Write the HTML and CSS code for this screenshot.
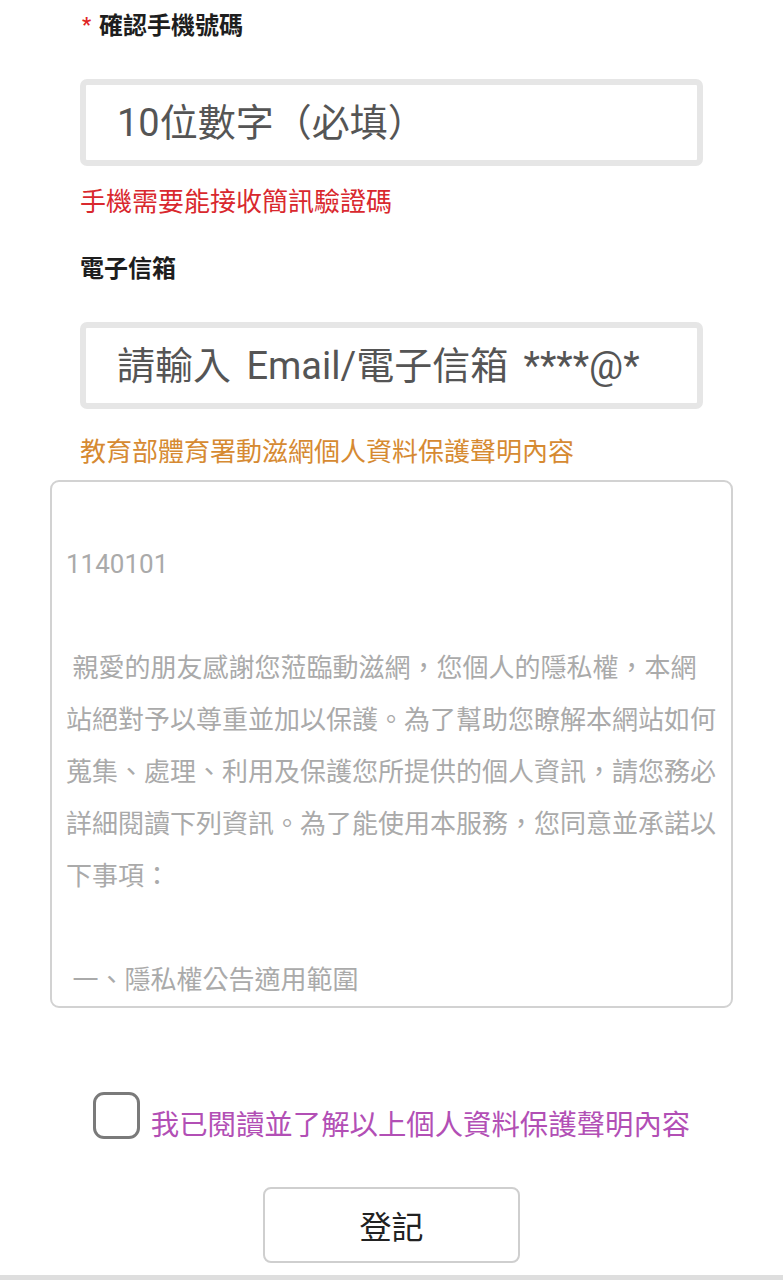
FILE: index.html
```html
<!DOCTYPE html>
<html>
<head>
<meta http-equiv="Content-Type" content="text/html; charset=utf-8"/>
<title>動滋網 登記</title>
<link rel="stylesheet" href="styles.css">
</head>
<body>
<div class="form">

  <div class="field-label first"><span class="req">*</span>確認手機號碼</div>
  <input class="text-input" type="text" placeholder="10位數字（必填）">
  <div class="hint red">手機需要能接收簡訊驗證碼</div>

  <div class="field-label mail">電子信箱</div>
  <input class="text-input mail-input" type="text" placeholder="請輸入 Email/電子信箱 ****@*">
  <div class="hint orange">教育部體育署動滋網個人資料保護聲明內容</div>

  <div class="notice">
    <p>1140101</p>
    <p>&nbsp;親愛的朋友感謝您蒞臨動滋網，您個人的隱私權，本網<br>站絕對予以尊重並加以保護。為了幫助您瞭解本網站如何<br>蒐集、處理、利用及保護您所提供的個人資訊，請您務必<br>詳細閱讀下列資訊。為了能使用本服務，您同意並承諾以<br>下事項：</p>
    <p>&nbsp;一、隱私權公告適用範圍</p>
  </div>

  <div class="agree">
    <span class="box"></span>
    <span class="agree-text">我已閱讀並了解以上個人資料保護聲明內容</span>
  </div>

  <div class="actions">
    <button class="submit" type="button">登記</button>
  </div>
</div>
<div class="bottom-bar"></div>
</body>
</html>
```

FILE: styles.css
```css
body {
  margin: 0;
  background-color: white;
  font-family: Roboto, "Noto Sans CJK TC", sans-serif;
  color: #222;
}

.form {
  padding: 0 50px;
}

.field-label {
  margin: 0 30px;
  font-size: 24px;
  font-weight: bold;
  line-height: 36px;
  color: #1e1e1e;
}

.field-label.first {
  padding-top: 7px;
  margin-left: 32px;
}

.field-label.mail {
  margin-top: 31px;
}

.req {
  color: #e02424;
  font-size: 20px;
  margin-right: 8px;
  vertical-align: 2px;
}

.text-input {
  display: block;
  box-sizing: border-box;
  width: 623px;
  height: 87px;
  margin: 35px 30px 0;
  padding: 0 22px 0 31px;
  border: 6px solid #e6e6e6;
  border-radius: 7px;
  background: white;
  font-family: Roboto, "Noto Sans CJK TC", sans-serif;
  font-size: 38px;
  color: #555;
  outline: none;
}

.text-input::placeholder {
  color: #555;
}

.mail-input::placeholder {
  word-spacing: 6px;
}

.hint {
  margin: 18px 30px 0;
  font-size: 26px;
  line-height: 36px;
}

.red {
  color: #d9282e;
}

.orange {
  color: #d68a32;
  margin-top: 25px;
}

.notice {
  box-sizing: border-box;
  height: 528px;
  margin-top: 10px;
  padding: 56px 14px 0;
  border: 2px solid #d2d2d2;
  border-radius: 9px;
  overflow: hidden;
  font-size: 26px;
  line-height: 52px;
  color: #aaa;
}

.notice p {
  margin: 0 0 52px;
}

.agree {
  display: flex;
  justify-content: center;
  align-items: flex-end;
  gap: 11px;
  margin-top: 84px;
}

.box {
  flex: none;
  box-sizing: border-box;
  width: 47px;
  height: 47px;
  border: 3px solid #7a7a7a;
  border-radius: 11px;
}

.agree-text {
  font-size: 28.4px;
  line-height: 42px;
  color: #b24fb5;
  margin-bottom: -8px;
}

.actions {
  display: flex;
  justify-content: center;
  margin-top: 48px;
}

.submit {
  width: 257px;
  height: 76px;
  border: 2px solid #cfcfcf;
  border-radius: 8px;
  background: white;
  font-family: Roboto, "Noto Sans CJK TC", sans-serif;
  font-size: 32px;
  color: #222;
}

.bottom-bar {
  margin-top: 12px;
  height: 8px;
  background: #dedede;
}
```
